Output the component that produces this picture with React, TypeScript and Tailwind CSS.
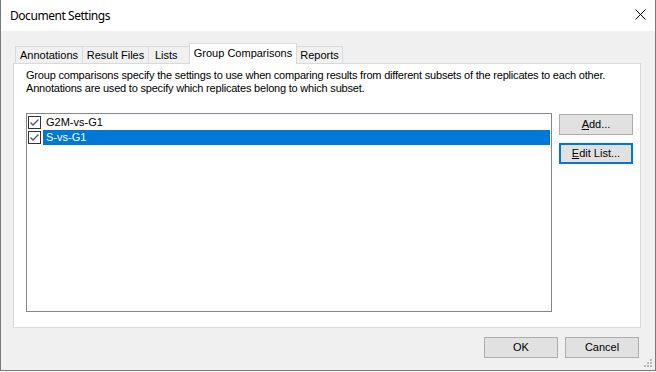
import React from "react";

const ui = { fontFamily: '"Liberation Sans", Arial, sans-serif' };

function Check() {
  return (
    <span className="w-[13px] h-[13px] border border-[#333333] bg-white flex items-center justify-center shrink-0">
      <svg width="11" height="11" viewBox="0 0 11 11">
        <path d="M1.5 5.5 L4 8 L9.5 2.5" fill="none" stroke="#555555" strokeWidth="1.3" />
      </svg>
    </span>
  );
}

function Btn({ children, focused = false }: { children: React.ReactNode; focused?: boolean }) {
  return (
    <div
      className={
        "w-[74px] h-[21px] bg-[#e1e1e1] flex items-center justify-center text-[11px] text-black " +
        (focused ? "border-2 border-[#0078d7]" : "border border-[#adadad]")
      }
    >
      {children}
    </div>
  );
}

export default function App() {
  return (
    <div className="w-[656px] h-[372px] bg-white" style={ui}>
      <div className="w-[656px] h-[371px] border-l border-r border-b border-[#7a7a7a] flex flex-col">
        <div className="h-[31px] bg-white flex items-center justify-between pl-[9px] pr-[9px] shrink-0">
          <span className="text-[12px] text-black tracking-[-0.45px]" style={{ fontFamily: '"Noto Sans", "Open Sans", sans-serif' }}>
            Document Settings
          </span>
          <svg width="11" height="11" viewBox="0 0 11 11" className="mt-[-2px]">
            <path d="M0.5 0.5 L10.5 10.5 M10.5 0.5 L0.5 10.5" stroke="#000" strokeWidth="1" />
          </svg>
        </div>
        <div className="flex-1 bg-[#f0f0f0] pt-[12px] pl-[12px] pr-[14px] flex flex-col relative">
          <div className="h-[20px] flex items-end pl-[2px] text-[11px] text-black">
            <div className="w-[67px] h-[17px] border-l border-t border-[#d9d9d9] flex items-center justify-center">Annotations</div>
            <div className="w-[66px] h-[17px] border-l border-t border-[#d9d9d9] flex items-center justify-center">Result Files</div>
            <div className="w-[41px] h-[17px] border-l border-t border-[#d9d9d9] flex items-center pl-[6px]">Lists</div>
            <div className="w-[108px] h-[21px] mb-[-1px] relative z-10 bg-white border-l border-t border-r border-[#d9d9d9] flex items-center justify-center pb-[2px]">
              Group Comparisons
            </div>
            <div className="w-[46px] h-[17px] border-t border-r border-[#d9d9d9] flex items-center justify-center">Reports</div>
          </div>
          <div className="h-[265px] border border-[#d9d9d9] bg-white pl-[12px] pt-[5px] pr-[7px] pb-[15px] flex flex-col">
            <p className="text-[11px] leading-[13px] text-black tracking-[-0.2px]">
              Group comparisons specify the settings to use when comparing results from different subsets of the replicates to each other.
              <br />
              Annotations are used to specify which replicates belong to which subset.
            </p>
            <div className="mt-[18px] flex gap-[7px] flex-1">
              <div className="flex-1 border border-[#828790] bg-white pt-[1px] pl-[1px] pr-[1px] flex flex-col text-[11px]">
                <div className="h-[15px] flex items-center">
                  <Check />
                  <span className="ml-[2px] flex-1 h-[15px] pl-[3px] flex items-center text-black">G2M-vs-G1</span>
                </div>
                <div className="h-[15px] flex items-center">
                  <Check />
                  <span className="ml-[2px] flex-1 h-[15px] pl-[3px] flex items-center bg-[#0078d7] text-white">S-vs-G1</span>
                </div>
              </div>
              <div className="flex flex-col gap-[8px] pt-[1px]">
                <Btn>
                  <span><span className="underline">A</span>dd...</span>
                </Btn>
                <Btn focused>
                  <span><span className="underline">E</span>dit List...</span>
                </Btn>
              </div>
            </div>
          </div>
          <div className="mt-[9px] flex justify-end gap-[7px] pr-[2px]">
            <Btn>OK</Btn>
            <Btn>Cancel</Btn>
          </div>
          <svg width="10" height="10" viewBox="0 0 10 10" className="absolute right-[2px] bottom-[2px]">
            <rect x="7" y="1" width="2" height="2" fill="#b8b8b8" />
            <rect x="4" y="4" width="2" height="2" fill="#b8b8b8" />
            <rect x="7" y="4" width="2" height="2" fill="#b8b8b8" />
            <rect x="1" y="7" width="2" height="2" fill="#b8b8b8" />
            <rect x="4" y="7" width="2" height="2" fill="#b8b8b8" />
            <rect x="7" y="7" width="2" height="2" fill="#b8b8b8" />
          </svg>
        </div>
      </div>
    </div>
  );
}
